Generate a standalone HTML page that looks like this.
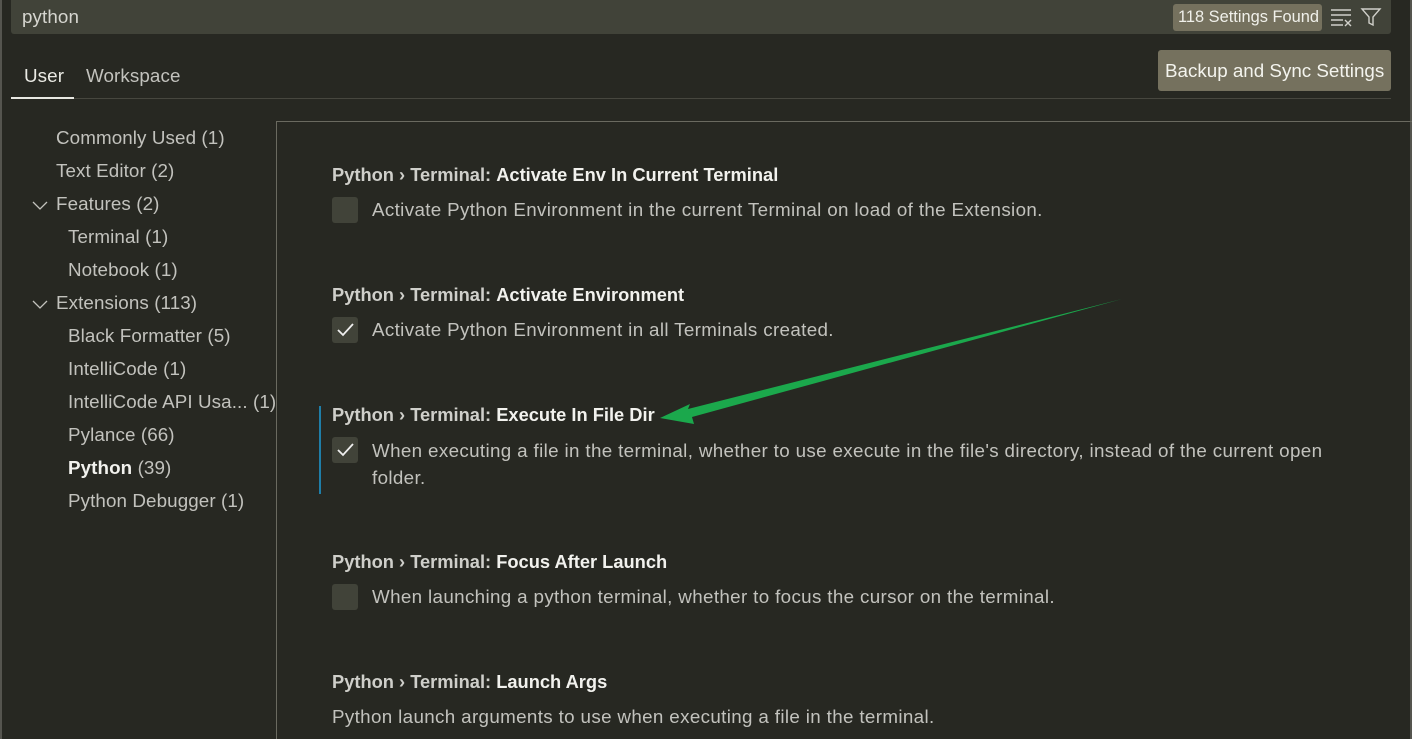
<!DOCTYPE html><html><head><style>
body{margin:0;width:1412px;height:739px;background:#272822;font-family:"Liberation Sans",sans-serif;color:#c2c2bd;position:relative;overflow:hidden}
.a{position:absolute;white-space:nowrap}
.t{font-size:18.8px;letter-spacing:0.1px}
.d{font-size:18.8px;letter-spacing:0.35px}
.h{font-size:18.3px;font-weight:bold;color:#cfcfca}
.h b{color:#f2f2ee}
.cb{position:absolute;width:26px;height:26px;background:#414339;border-radius:3px}
</style></head><body>
<div class="a" style="left:0;top:0;width:2px;height:739px;background:#55554f"></div>
<div class="a" style="left:1410px;top:0;width:2px;height:739px;background:#55554f"></div>
<div class="a" style="left:11px;top:0;width:1380px;height:34px;background:#414339;border-radius:0 0 3px 3px"></div>
<div class="a t" style="left:22px;top:6px;color:#d6d6d0">python</div>
<div class="a" style="left:1173px;top:4px;width:149px;height:27px;background:#75715e;border-radius:3px"></div>
<div class="a" style="left:1178px;top:8px;font-size:16.4px;color:#f0f0ea">118 Settings Found</div>
<svg class="a" style="left:1330px;top:7px" width="52" height="20"><g stroke="#d0d0ca" stroke-width="1.4" fill="none"><path d="M1 3h20M1 8h20M1 13h12M1 18h12M15 13l6 6M21 13l-6 6"/><path d="M32 2h18l-7 8v8l-4-2v-6z"/></g></svg>
<div class="a t" style="left:24px;top:65px;color:#eaeae4">User</div>
<div class="a t" style="left:86px;top:65px">Workspace</div>
<div class="a" style="left:11px;top:98px;width:1380px;height:1px;background:#47473f"></div>
<div class="a" style="left:11px;top:97px;width:63px;height:2px;background:#e8e8e2"></div>
<div class="a" style="left:1158px;top:50px;width:233px;height:41px;background:#75715e;border-radius:3px"></div>
<div class="a" style="left:1165px;top:60px;font-size:18.8px;color:#f4f4ee">Backup and Sync Settings</div>
<div class="a" style="left:276px;top:121px;width:1136px;height:1px;background:#6a6a60"></div>
<div class="a" style="left:276px;top:121px;width:1px;height:618px;background:#6a6a60"></div>
<div class="a t" style="left:56px;top:127px">Commonly Used (1)</div>
<div class="a t" style="left:56px;top:160px">Text Editor (2)</div>
<svg class="a" style="left:32px;top:199px" width="16" height="12"><path d="M1 3l7 7 7-7" stroke="#c2c2bd" stroke-width="1.3" fill="none"/></svg>
<div class="a t" style="left:56px;top:193px">Features (2)</div>
<div class="a t" style="left:68px;top:226px">Terminal (1)</div>
<div class="a t" style="left:68px;top:259px">Notebook (1)</div>
<svg class="a" style="left:32px;top:298px" width="16" height="12"><path d="M1 3l7 7 7-7" stroke="#c2c2bd" stroke-width="1.3" fill="none"/></svg>
<div class="a t" style="left:56px;top:292px">Extensions (113)</div>
<div class="a t" style="left:68px;top:325px">Black Formatter (5)</div>
<div class="a t" style="left:68px;top:358px">IntelliCode (1)</div>
<div class="a t" style="left:68px;top:391px">IntelliCode API Usa... (1)</div>
<div class="a t" style="left:68px;top:424px">Pylance (66)</div>
<div class="a t" style="left:68px;top:457px"><b style="color:#f2f2ee">Python</b> (39)</div>
<div class="a t" style="left:68px;top:490px">Python Debugger (1)</div>

<div class="a h" style="left:332px;top:164px">Python › Terminal: <b>Activate Env In Current Terminal</b></div>
<div class="cb" style="left:332px;top:197px"></div>
<div class="a d" style="left:372px;top:199px">Activate Python Environment in the current Terminal on load of the Extension.</div>

<div class="a h" style="left:332px;top:284px">Python › Terminal: <b>Activate Environment</b></div>
<div class="cb" style="left:332px;top:317px"></div>
<svg class="a" style="left:332px;top:317px" width="26" height="26"><path d="M6 13l5 5L21 7" stroke="#eee" stroke-width="1.8" fill="none"/></svg>
<div class="a d" style="left:372px;top:319px">Activate Python Environment in all Terminals created.</div>

<div class="a" style="left:319px;top:406px;width:2px;height:88px;background:#1f7ea8"></div>
<div class="a h" style="left:332px;top:404px">Python › Terminal: <b>Execute In File Dir</b></div>
<div class="cb" style="left:332px;top:437px"></div>
<svg class="a" style="left:332px;top:437px" width="26" height="26"><path d="M6 13l5 5L21 7" stroke="#eee" stroke-width="1.8" fill="none"/></svg>
<div class="a d" style="left:372px;top:437px;line-height:27px">When executing a file in the terminal, whether to use execute in the file's directory, instead of the current open<br>folder.</div>

<div class="a h" style="left:332px;top:551px">Python › Terminal: <b>Focus After Launch</b></div>
<div class="cb" style="left:332px;top:584px"></div>
<div class="a d" style="left:372px;top:586px">When launching a python terminal, whether to focus the cursor on the terminal.</div>

<div class="a h" style="left:332px;top:671px">Python › Terminal: <b>Launch Args</b></div>
<div class="a d" style="left:332px;top:706px">Python launch arguments to use when executing a file in the terminal.</div>

<svg class="a" style="left:0;top:0" width="1412" height="739"><path d="M1122 299L688 409L690 404L660 418L694 424L692 417Z" fill="#1ba84c"/></svg>
</body></html>
